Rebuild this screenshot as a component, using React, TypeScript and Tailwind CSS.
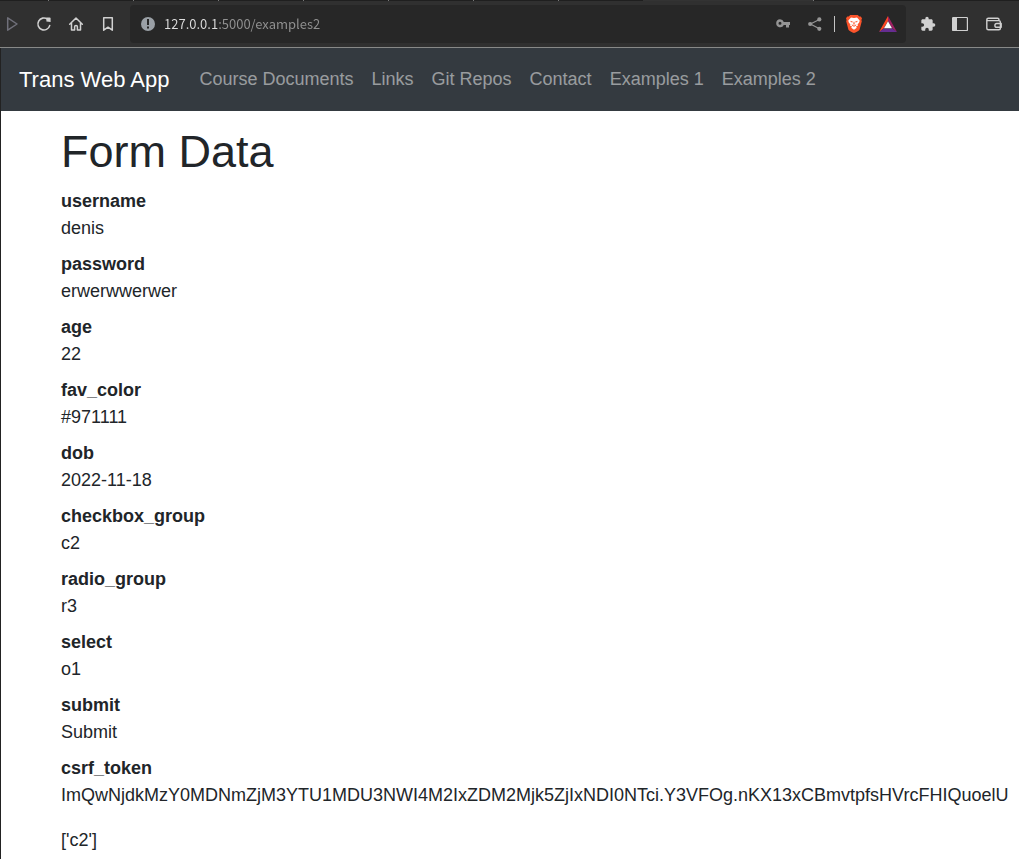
import React from "react";

const fields: [string, string][] = [
  ["username", "denis"],
  ["password", "erwerwwerwer"],
  ["age", "22"],
  ["fav_color", "#971111"],
  ["dob", "2022-11-18"],
  ["checkbox_group", "c2"],
  ["radio_group", "r3"],
  ["select", "o1"],
  ["submit", "Submit"],
  [
    "csrf_token",
    "ImQwNjdkMzY0MDNmZjM3YTU1MDU3NWI4M2IxZDM2Mjk5ZjIxNDI0NTci.Y3VFOg.nKX13xCBmvtpfsHVrcFHIQuoelU",
  ],
];

const links = ["Course Documents", "Links", "Git Repos", "Contact", "Examples 1", "Examples 2"];

function IconButton({
  label,
  className = "w-8",
  children,
}: {
  label: string;
  className?: string;
  children: React.ReactNode;
}) {
  return (
    <button
      type="button"
      aria-label={label}
      className={`flex h-8 shrink-0 items-center justify-center ${className}`}
    >
      {children}
    </button>
  );
}

const stroke = {
  fill: "none",
  stroke: "currentColor",
  strokeLinejoin: "round" as const,
  strokeLinecap: "round" as const,
};

function TabStrip() {
  return (
    <div className="flex h-px bg-[#333333]">
      <div className="flex w-[643px] bg-[#1f1f1f] pl-12">
        {[0, 1, 2, 3, 4, 5, 6].map((n) => (
          <span key={n} className="mr-[84px] h-px w-px shrink-0 bg-[#777777]" />
        ))}
      </div>
      <span className="ml-[170px] h-px w-px bg-[#777777]" />
      <span className="h-px flex-1 bg-[#1f1f1f]" />
    </div>
  );
}

function AddressBar() {
  return (
    <div className="flex h-[38px] min-w-0 flex-1 items-center rounded bg-[#272727] pr-0.5 pl-[11px] text-[#959595]">
      <svg width="14" height="14" viewBox="0 0 14 14" className="shrink-0" aria-hidden="true">
        <circle cx="7" cy="7" r="7" fill="#9aa0a6" />
        <path d="M6 2h2v6H6zM6 9.500h2v2H6z" fill="#272727" />
      </svg>
      <input
        aria-label="Address"
        defaultValue="127.0.0.1:5000/examples2"
        className="ml-[9px] h-6 min-w-0 flex-1 bg-linear-to-r from-[#dedede] from-[54px] to-[#929292] to-[54px] bg-clip-text pb-0.5 font-['Noto_Sans_CJK_SC',sans-serif] text-[13px] text-transparent caret-white outline-none"
      />
      <IconButton label="Passwords">
        <svg width="16" height="16" viewBox="0 0 16 16">
          <path
            fill="currentColor"
            fillRule="evenodd"
            d="M5 3.300a4 4 0 0 1 3.800 2.700H15V9h-1v2.600h-3V9H8.800A4 4 0 1 1 5 3.300zm0 2.500a1.500 1.500 0 1 0 0 3 1.500 1.500 0 0 0 0-3z"
          />
        </svg>
      </IconButton>
      <IconButton label="Share">
        <svg width="16" height="16" viewBox="0 0 16 16" fill="currentColor">
          <path {...stroke} strokeWidth="1.2" d="M12.400 3.500L3.400 8l9 4.800" />
          <circle cx="12.300" cy="3.400" r="2.100" />
          <circle cx="3.200" cy="8" r="2.100" />
          <circle cx="12.300" cy="12.800" r="2.100" />
        </svg>
      </IconButton>
      <span className="mx-[3px] h-4 w-px bg-[#c4c4c4]" />
      <IconButton label="Brave Shields">
        <svg width="16" height="18" viewBox="0 0 16 18">
          <path
            fill="#fb542b"
            d="M4.2 0h7.6l1.5 1.6 1.4-.1L16 3.3l-.6 1.7.4 1.3-2.2 8.2c-.3 1-4 3-5.6 3.5-1.6-.5-5.3-2.5-5.6-3.500L.2 6.300.6 5 0 3.300l1.300-1.800 1.400.1z"
          />
          <path
            fill="#fff"
            d="M5 2.600l3 .5 3-.5 2.700 3-.4 1.600-1.700 2.200.3 1.300-2 .9.900 1.100L8 14.700l-2.800-2 .9-1.100-2-.9.300-1.300-1.700-2.200-.4-1.600z"
          />
          <path
            fill="#fb542b"
            d="M3.800 5.700l3 .7-.7 1.300zM12.200 5.700l-3 .7.700 1.300zM7.600 6.800h.8l.3 2.400L8 9.700l-.7-.5zM5.700 9.300L8 10.800l2.300-1.500-.3 1.200L8 11.700l-2-1.200z"
          />
        </svg>
      </IconButton>
      <IconButton label="Brave Rewards" className="ml-0.5 w-8">
        <svg width="18" height="16" viewBox="0 0 18 16">
          <path fill="#ff4724" d="M9 0v5L4.600 12.400 0 16z" />
          <path fill="#9e1f63" d="M9 0l9 16-4.600-3.600L9 5z" />
          <path fill="#662d91" d="M0 16l4.600-3.600h8.800L18 16z" />
          <path fill="#fff" d="M9 5.300l4 6.900H5z" />
        </svg>
      </IconButton>
    </div>
  );
}

function Toolbar() {
  return (
    <div className="flex h-[47px] items-center border-b border-[#888988] bg-[#303030] text-[#d0d0d0]">
      <IconButton label="Forward" className="mr-1 w-6 text-[#70707a]">
        <svg width="16" height="16" viewBox="0 0 16 16">
          <path {...stroke} strokeWidth="1.500" d="M3.700 1.800v12.400L13 8z" />
        </svg>
      </IconButton>
      <IconButton label="Reload">
        <svg width="16" height="16" viewBox="0 0 16 16">
          <path {...stroke} strokeWidth="1.600" d="M13.700 9.600A6 6 0 1 1 11.400 3.100" />
          <path fill="currentColor" d="M10.400 1.500h3.200a1 1 0 0 1 1 1V6l-4.200-.4z" />
        </svg>
      </IconButton>
      <IconButton label="Home">
        <svg width="16" height="16" viewBox="0 0 16 16">
          <path
            {...stroke}
            strokeWidth="1.500"
            d="M1.700 8.300L8 2l6.300 6.300M3.500 7v7h3.100v-3.200a1.400 1.400 0 0 1 2.800 0V14h3.100V7"
          />
        </svg>
      </IconButton>
      <IconButton label="Bookmark" className="mr-1.5 w-8">
        <svg width="16" height="16" viewBox="0 0 16 16">
          <path {...stroke} strokeWidth="1.500" d="M3.700 1.800h8.600v12.400L8 11.200l-4.300 3z" />
        </svg>
      </IconButton>
      <AddressBar />
      <IconButton label="Extensions" className="ml-1.5 w-8">
        <svg width="16" height="16" viewBox="0 0 24 24" fill="currentColor">
          <path d="M20.500 11H19V7c0-1.100-.9-2-2-2h-4V3.500a2.500 2.500 0 0 0-5 0V5H4c-1.100 0-2 .9-2 2v3.800h1.500a2.700 2.700 0 0 1 0 5.400H2V20c0 1.100.9 2 2 2h3.800v-1.500a2.700 2.700 0 0 1 5.400 0V22H17c1.100 0 2-.9 2-2v-4h1.500a2.500 2.500 0 0 0 0-5z" />
        </svg>
      </IconButton>
      <IconButton label="Sidebar">
        <svg width="16" height="16" viewBox="0 0 16 16">
          <rect x=".6" y="1.500" width="14.800" height="13" rx=".6" {...stroke} strokeWidth="1.200" />
          <path fill="currentColor" d="M1 2h4v12H1z" />
        </svg>
      </IconButton>
      <IconButton label="Wallet" className="mr-[9px] ml-0.5 w-8">
        <svg width="16" height="16" viewBox="0 0 16 16">
          <path
            {...stroke}
            strokeWidth="1.400"
            d="M13 4.600V3.700c0-.9-.6-1.500-1.400-1.500H2.400C1.400 2.200.8 2.800.8 3.700v8.600c0 .9.700 1.500 1.600 1.500h10.400c.9 0 1.600-.6 1.600-1.500V6.200c0-.9-.7-1.600-1.600-1.600H2.400C1.500 4.600.8 4.300.8 3.700M15.200 7.500h-4.400a1.900 1.900 0 0 0 0 3.800h4.400z"
          />
        </svg>
      </IconButton>
    </div>
  );
}

export default function App() {
  return (
    <div className="flex min-h-screen flex-col bg-white font-['Liberation_Sans',Arial,sans-serif] text-lg leading-[27px] text-[#212529]">
      <header>
        <TabStrip />
        <Toolbar />
      </header>
      <div className="flex-1 border-l border-[#222222]">
        <nav className="flex h-[63px] items-center bg-[#343a40] pl-[18px]">
          <a href="#home" className="mr-[21px] text-[22px] whitespace-nowrap text-white">
            Trans Web App
          </a>
          <ul className="flex">
            {links.map((l) => (
              <li key={l}>
                <a href="#page" className="px-[9px] whitespace-nowrap text-white/50">
                  {l}
                </a>
              </li>
            ))}
          </ul>
        </nav>
        <main className="pt-[14px] pl-[60px]">
          <h1 className="mb-[9px] text-[45px] leading-[54px]">Form Data</h1>
          <dl className="mb-[18px]">
            {fields.map(([k, v]) => (
              <div key={k} className="mb-[9px] last:mb-0">
                <dt className="font-bold">{k}</dt>
                <dd className="whitespace-nowrap">{v}</dd>
              </div>
            ))}
          </dl>
          <p>['c2']</p>
        </main>
      </div>
    </div>
  );
}
